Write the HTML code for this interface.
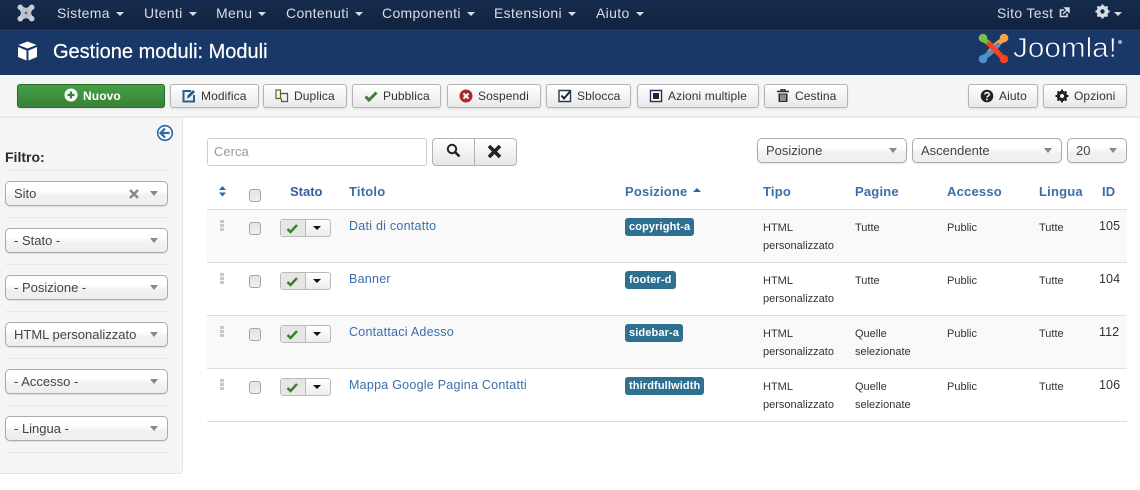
<!DOCTYPE html>
<html><head><meta charset="utf-8"><style>
*{box-sizing:border-box}
html,body{margin:0;padding:0;width:1140px;height:490px;overflow:hidden;background:#fff;font-family:"Liberation Sans",sans-serif;color:#333}
.a{position:absolute;white-space:nowrap}
.n{position:absolute;top:4px;font-size:14px;line-height:18px;color:#d8dde5;white-space:nowrap;letter-spacing:.33px}
.c{display:inline-block;width:0;height:0;border:4px solid transparent;border-top-color:#d8dde5;border-bottom:0;margin-left:6px;vertical-align:2px}
.b{position:absolute;top:84px;height:24px;border:1px solid #b3b3b3;border-radius:3px;background:linear-gradient(#fff,#e9e9e9);box-shadow:0 1px 2px rgba(0,0,0,.08);font-size:12px;line-height:22px;color:#333;white-space:nowrap;letter-spacing:.1px}
.b svg{position:absolute;top:4px;left:11px}
.b span{position:absolute;top:0}
.s{position:absolute;height:25px;border:1px solid #aaa;border-radius:5px;background:linear-gradient(#fff 0,#fff 35%,#f1f1f1 60%,#eee);box-shadow:0 1px 1px rgba(0,0,0,.1);font-size:13px;line-height:23px;color:#444;padding-left:8px;white-space:nowrap;overflow:hidden}
.s i{position:absolute;right:9px;top:9px;width:0;height:0;border:4px solid transparent;border-top:5px solid #888;border-bottom:0}
.h{position:absolute;top:184px;font-size:13px;line-height:16px;font-weight:bold;color:#3b6ea8;white-space:nowrap;letter-spacing:.2px}
.hr{position:absolute;left:5px;width:163px;height:1px;background:#e8e8e8}
.r{position:absolute;left:207px;width:920px;height:53px;border-bottom:1px solid #ddd}
.t{position:absolute;font-size:11px;line-height:18px;color:#333;white-space:nowrap}
.l{position:absolute;left:349px;font-size:12.5px;line-height:16px;color:#3b6ea8;white-space:nowrap;letter-spacing:.25px}
.id{position:absolute;left:1099px;font-size:12.5px;line-height:16px;color:#333;letter-spacing:.1px}
.lb{position:absolute;left:625px;height:18px;padding:0 4px;border-radius:3px;background:#2f6f8f;color:#fff;font-size:11px;line-height:18px;font-weight:bold;white-space:nowrap;letter-spacing:.12px}
.cb{position:absolute;left:249px;width:12px;height:13px;border:1px solid #a5a5a5;border-radius:3px;background:linear-gradient(#e3e3e3,#efefef)}
.dr{position:absolute;left:220px;width:4px;height:11px;background:repeating-linear-gradient(#c8c8c8 0,#c8c8c8 3px,#f4f4f4 3px,#f4f4f4 4px)}
.g{position:absolute;left:280px;width:51px;height:18px;border:1px solid #bbb;border-radius:3px;background:linear-gradient(#fff,#ececec)}
.g b{position:absolute;left:0;top:0;width:25px;height:16px;background:#e6e6e6;border-right:1px solid #bbb}
.g svg{position:absolute;left:5px;top:3px}
.g i{position:absolute;left:32px;top:6px;width:0;height:0;border:4px solid transparent;border-top:4px solid #111;border-bottom:0}
</style></head><body>

<div class="a" style="left:0;top:0;width:1140px;height:29px;background:linear-gradient(#172c4e,#11233f);border-bottom:1px solid #0d1b31"></div>
<svg class="a" style="left:17px;top:4px" width="18" height="18" viewBox="0 0 18 18"><path d="M3 3H15V15H3Z" fill="#bcc1cb"/><path d="M9 7.500L10.500 9L9 10.500L7.500 9Z" fill="#45536c"/><path d="M7.500 3.200H10.500M7.500 14.800H10.500M3.200 7.500V10.500M14.800 7.500V10.500" stroke="#13264a" stroke-width="1.200"/><g fill="#c9ced6"><circle cx="3.300" cy="3.300" r="2.800"/><circle cx="14.700" cy="3.300" r="2.800"/><circle cx="3.300" cy="14.700" r="2.800"/><circle cx="14.700" cy="14.700" r="2.800"/></g></svg>
<div class="n" style="left:57px">Sistema<span class="c"></span></div>
<div class="n" style="left:144px">Utenti<span class="c"></span></div>
<div class="n" style="left:216px">Menu<span class="c"></span></div>
<div class="n" style="left:286px">Contenuti<span class="c"></span></div>
<div class="n" style="left:382px">Componenti<span class="c"></span></div>
<div class="n" style="left:494px">Estensioni<span class="c"></span></div>
<div class="n" style="left:596px">Aiuto<span class="c"></span></div>
<div class="n" style="left:997px">Sito Test</div>
<svg class="a" style="left:1059px;top:7px" width="11" height="11" viewBox="0 0 11 11"><path d="M8 6.500V9.500H1.500V3H5" fill="none" stroke="#d8dde5" stroke-width="1.600"/><path d="M4 7L8.500 2.500M6 1H10V5Z" stroke="#d8dde5" stroke-width="1.400" fill="#d8dde5"/></svg>
<svg class="a" style="left:1095px;top:4px" width="15" height="15" viewBox="0 0 15 15"><circle cx="7.500" cy="7.500" r="4.300" fill="none" stroke="#d8dde5" stroke-width="3"/><path d="M7.500 .5V14.500M.5 7.500H14.500M2.500 2.500L12.500 12.500M12.500 2.500L2.500 12.500" stroke="#d8dde5" stroke-width="2.200"/><circle cx="7.500" cy="7.500" r="2.200" fill="#13284a"/></svg>
<span class="c a" style="left:1114px;top:12px;margin:0"></span>

<div class="a" style="left:0;top:29px;width:1140px;height:46px;background:#1a3867"></div>
<svg class="a" style="left:17px;top:41px" width="21" height="20" viewBox="0 0 21 20"><path d="M10.500 .5L19.500 4L10.500 7.500L1.500 4Z" fill="#fff"/><path d="M1 6L9.500 9.500V19.500L1 16Z" fill="#fff"/><path d="M20 6L11.500 9.500V19.500L20 16Z" fill="#fff"/></svg>
<div class="a" style="left:53px;top:40px;font-size:20px;line-height:24px;color:#fff;-webkit-text-stroke:.2px #fff">Gestione moduli: Moduli</div>
<svg class="a" style="left:978px;top:33px" width="31" height="31" viewBox="0 0 31 31"><g fill="none" stroke-width="5" stroke-linecap="round"><path d="M6 7C10 9 14 13 19 19" stroke="#7ac143"/><path d="M25 7C21 9 17 12 11 20" stroke="#f9a541"/><path d="M6 24C10 22 15 18 20 12" stroke="#5091cd"/><path d="M25 25C22 22 18 17 11 11" stroke="#f44321"/></g><circle cx="5" cy="5" r="4.300" fill="#7ac143"/><circle cx="26" cy="5" r="4.300" fill="#f9a541"/><circle cx="5" cy="26" r="4.300" fill="#5091cd"/><circle cx="26" cy="26" r="4.300" fill="#f44321"/></svg>
<div class="a" style="left:1013px;top:31px;font-size:28px;line-height:34px;color:#fff;-webkit-text-stroke:.7px #1a3867;transform-origin:0 50%;transform:scaleX(1.06)">Joomla!</div>
<div class="a" style="left:1118px;top:40px;width:4px;height:4px;border-radius:50%;background:#9fb0c8"></div>

<div class="a" style="left:0;top:75px;width:1140px;height:43px;background:#f5f5f5;border-bottom:2px solid #e9e9e9"></div>
<div class="b" style="left:17px;width:148px;background:linear-gradient(#46a046,#378137);border-color:#2c6e2c;color:#fff;font-weight:bold"><svg style="left:46px;top:3px" width="14" height="14" viewBox="0 0 14 14"><circle cx="7" cy="7" r="6.500" fill="#fff"/><path d="M3.500 7H10.500M7 3.500V10.500" stroke="#378137" stroke-width="2.200"/></svg><span style="left:65px">Nuovo</span></div>
<div class="b" style="left:170px;width:89px"><svg width="14" height="14" viewBox="0 0 14 14"><path d="M9 2H1.500V12.500H12V6" fill="none" stroke="#2b5d85" stroke-width="2"/><path d="M5 9.500L5.500 6.500L11 1L13 3L7.500 8.500Z" fill="#2b5d85"/></svg><span style="left:30px">Modifica</span></div>
<div class="b" style="left:263px;width:84px"><svg width="14" height="14" viewBox="0 0 14 14" fill="none" stroke="#6f5a2a" stroke-width="1.200"><path d="M1 1H5.500V9.500H1Z"/><path d="M5.500 4.500H12.500V12.500H6.500V9.500" stroke="#2b5d85"/></svg><span style="left:30px">Duplica</span></div>
<div class="b" style="left:352px;width:89px"><svg width="14" height="14" viewBox="0 0 14 14"><path d="M1.500 7.500L5 11L12.500 3.500" fill="none" stroke="#3b7f30" stroke-width="3"/></svg><span style="left:30px">Pubblica</span></div>
<div class="b" style="left:447px;width:94px"><svg width="14" height="14" viewBox="0 0 14 14"><circle cx="7" cy="7" r="6.500" fill="#a82b2b"/><path d="M4.500 4.500L9.500 9.500M9.500 4.500L4.500 9.500" stroke="#fff" stroke-width="2"/></svg><span style="left:30px">Sospendi</span></div>
<div class="b" style="left:546px;width:85px"><svg width="14" height="14" viewBox="0 0 14 14"><path d="M1 1.500H12.500V12.500H1Z" fill="#fff" stroke="#22385a" stroke-width="1.400"/><path d="M3.500 6.500L6 9.500L12 2.500" fill="none" stroke="#222" stroke-width="2"/></svg><span style="left:30px">Sblocca</span></div>
<div class="b" style="left:637px;width:122px"><svg width="14" height="14" viewBox="0 0 14 14"><path d="M1.500 1.500H12.500V12.500H1.500Z" fill="#fff" stroke="#22385a" stroke-width="1.400"/><path d="M4 4H10V10H4Z" fill="#222"/></svg><span style="left:30px">Azioni multiple</span></div>
<div class="b" style="left:764px;width:84px"><svg width="14" height="14" viewBox="0 0 14 14"><path d="M1 2.500H13M5 2.500V.8H9V2.500" fill="none" stroke="#2a2a2a" stroke-width="1.400"/><path d="M2.500 4.500H11.500V13H2.500Z" fill="#2a2a2a"/><path d="M5 5.500V12M7 5.500V12M9 5.500V12" stroke="#eee"/></svg><span style="left:30px">Cestina</span></div>
<div class="b" style="left:968px;width:70px"><svg width="14" height="14" viewBox="0 0 14 14"><circle cx="7" cy="7" r="6.300" fill="#222"/><path d="M4.800 5.500C4.800 3 9.300 3 9.300 5.500C9.300 7 7 7 7 8.500" fill="none" stroke="#fff" stroke-width="1.500"/><path d="M6.100 9.700H7.900V11.200H6.100Z" fill="#fff"/></svg><span style="left:30px">Aiuto</span></div>
<div class="b" style="left:1043px;width:84px"><svg width="14" height="14" viewBox="0 0 14 14"><circle cx="7" cy="7" r="3.800" fill="none" stroke="#222" stroke-width="2.800"/><path d="M7 .5V13.500M.5 7H13.500M2.500 2.500L11.500 11.500M11.500 2.500L2.500 11.500" stroke="#222" stroke-width="2"/><circle cx="7" cy="7" r="2" fill="#f3f3f3"/></svg><span style="left:30px">Opzioni</span></div>

<div class="a" style="left:0;top:118px;width:183px;height:356px;background:#f5f5f5;border-right:1px solid #e4e4e4;border-bottom:1px solid #e4e4e4;border-bottom-right-radius:4px"></div>
<svg class="a" style="left:156px;top:124px" width="18" height="18" viewBox="0 0 18 18"><circle cx="9" cy="9" r="7.300" fill="#fff" stroke="#2a69a8" stroke-width="1.600"/><path d="M9 4.500L4.500 9L9 13.500M5 9H13.500" fill="none" stroke="#2a69a8" stroke-width="2.200"/></svg>
<div class="a" style="left:5px;top:149px;font-size:14px;line-height:16px;font-weight:bold;color:#2b2b2b">Filtro:</div>
<div class="hr" style="top:170px"></div>
<div class="s" style="left:5px;top:181px;width:163px">Sito<svg style="position:absolute;left:123px;top:7px" width="10" height="10" viewBox="0 0 10 10"><path d="M1 1L9 9M9 1L1 9" stroke="#888" stroke-width="2.400"/></svg><i></i></div>
<div class="hr" style="top:217px"></div>
<div class="s" style="left:5px;top:228px;width:163px">- Stato -<i></i></div>
<div class="hr" style="top:264px"></div>
<div class="s" style="left:5px;top:275px;width:163px">- Posizione -<i></i></div>
<div class="hr" style="top:311px"></div>
<div class="s" style="left:5px;top:322px;width:163px">HTML personalizzato<i></i></div>
<div class="hr" style="top:358px"></div>
<div class="s" style="left:5px;top:369px;width:163px">- Accesso -<i></i></div>
<div class="hr" style="top:405px"></div>
<div class="s" style="left:5px;top:416px;width:163px">- Lingua -<i></i></div>
<div class="hr" style="top:452px"></div>

<div class="a" style="left:207px;top:138px;width:220px;height:28px;border:1px solid #ccc;border-radius:3px;background:#fff;font-size:13px;line-height:26px;padding-left:6px;color:#999">Cerca</div>
<div class="a" style="left:432px;top:138px;width:85px;height:28px;border:1px solid #b3b3b3;border-radius:4px;background:linear-gradient(#fff,#e6e6e6)"><div class="a" style="left:41px;top:0;width:1px;height:26px;background:#b3b3b3"></div>
<svg class="a" style="left:13px;top:4px" width="15" height="15" viewBox="0 0 15 15"><circle cx="6" cy="6" r="4.200" fill="none" stroke="#222" stroke-width="2"/><path d="M9 9L13.500 13.500" stroke="#222" stroke-width="2.600"/></svg>
<svg class="a" style="left:54px;top:5px" width="15" height="15" viewBox="0 0 15 15"><path d="M2 2L13 13M13 2L2 13" stroke="#222" stroke-width="3.600"/></svg></div>
<div class="s" style="left:757px;top:138px;width:150px">Posizione<i></i></div>
<div class="s" style="left:912px;top:138px;width:150px">Ascendente<i></i></div>
<div class="s" style="left:1067px;top:138px;width:60px">20<i></i></div>

<div class="a" style="left:207px;top:209px;width:920px;height:1px;background:#ddd"></div>
<svg class="a" style="left:218px;top:186px" width="9" height="11" viewBox="0 0 9 11"><path d="M4.500 0L8 4H1Z M1 6.500H8L4.500 10.500Z" fill="#2a69a8"/></svg>
<div class="cb" style="top:189px"></div>
<div class="h" style="left:290px;color:#2f62a0;letter-spacing:0">Stato</div>
<div class="h" style="left:349px">Titolo</div>
<div class="h" style="left:625px">Posizione</div>
<div class="a" style="left:693px;top:188px;width:0;height:0;border:4px solid transparent;border-bottom:4px solid #2f62a0;border-top:0"></div>
<div class="h" style="left:763px">Tipo</div>
<div class="h" style="left:855px">Pagine</div>
<div class="h" style="left:947px">Accesso</div>
<div class="h" style="left:1039px">Lingua</div>
<div class="h" style="left:1102px">ID</div>

<div class="r" style="top:210px;background:#f9f9f9"></div>
<div class="r" style="top:263px"></div>
<div class="r" style="top:316px;background:#f9f9f9"></div>
<div class="r" style="top:369px"></div>

<div class="dr" style="top:220px"></div><div class="cb" style="top:222px"></div>
<div class="g" style="top:219px"><b></b><svg width="13" height="11" viewBox="0 0 13 11"><path d="M1.500 6L4.500 9L11 2" fill="none" stroke="#3b7f30" stroke-width="2.400"/></svg><i></i></div>
<div class="l" style="top:218px">Dati di contatto</div>
<div class="lb" style="top:218px">copyright-a</div>
<div class="t" style="left:763px;top:219px">HTML<br>personalizzato</div>
<div class="t" style="left:855px;top:219px">Tutte</div>
<div class="t" style="left:947px;top:219px">Public</div>
<div class="t" style="left:1039px;top:219px">Tutte</div>
<div class="id" style="top:218px">105</div>

<div class="dr" style="top:273px"></div><div class="cb" style="top:275px"></div>
<div class="g" style="top:272px"><b></b><svg width="13" height="11" viewBox="0 0 13 11"><path d="M1.500 6L4.500 9L11 2" fill="none" stroke="#3b7f30" stroke-width="2.400"/></svg><i></i></div>
<div class="l" style="top:271px">Banner</div>
<div class="lb" style="top:271px">footer-d</div>
<div class="t" style="left:763px;top:272px">HTML<br>personalizzato</div>
<div class="t" style="left:855px;top:272px">Tutte</div>
<div class="t" style="left:947px;top:272px">Public</div>
<div class="t" style="left:1039px;top:272px">Tutte</div>
<div class="id" style="top:271px">104</div>

<div class="dr" style="top:326px"></div><div class="cb" style="top:328px"></div>
<div class="g" style="top:325px"><b></b><svg width="13" height="11" viewBox="0 0 13 11"><path d="M1.500 6L4.500 9L11 2" fill="none" stroke="#3b7f30" stroke-width="2.400"/></svg><i></i></div>
<div class="l" style="top:324px">Contattaci Adesso</div>
<div class="lb" style="top:324px">sidebar-a</div>
<div class="t" style="left:763px;top:325px">HTML<br>personalizzato</div>
<div class="t" style="left:855px;top:325px">Quelle<br>selezionate</div>
<div class="t" style="left:947px;top:325px">Public</div>
<div class="t" style="left:1039px;top:325px">Tutte</div>
<div class="id" style="top:324px">112</div>

<div class="dr" style="top:379px"></div><div class="cb" style="top:381px"></div>
<div class="g" style="top:378px"><b></b><svg width="13" height="11" viewBox="0 0 13 11"><path d="M1.500 6L4.500 9L11 2" fill="none" stroke="#3b7f30" stroke-width="2.400"/></svg><i></i></div>
<div class="l" style="top:377px">Mappa Google Pagina Contatti</div>
<div class="lb" style="top:377px">thirdfullwidth</div>
<div class="t" style="left:763px;top:378px">HTML<br>personalizzato</div>
<div class="t" style="left:855px;top:378px">Quelle<br>selezionate</div>
<div class="t" style="left:947px;top:378px">Public</div>
<div class="t" style="left:1039px;top:378px">Tutte</div>
<div class="id" style="top:377px">106</div>

</body></html>
